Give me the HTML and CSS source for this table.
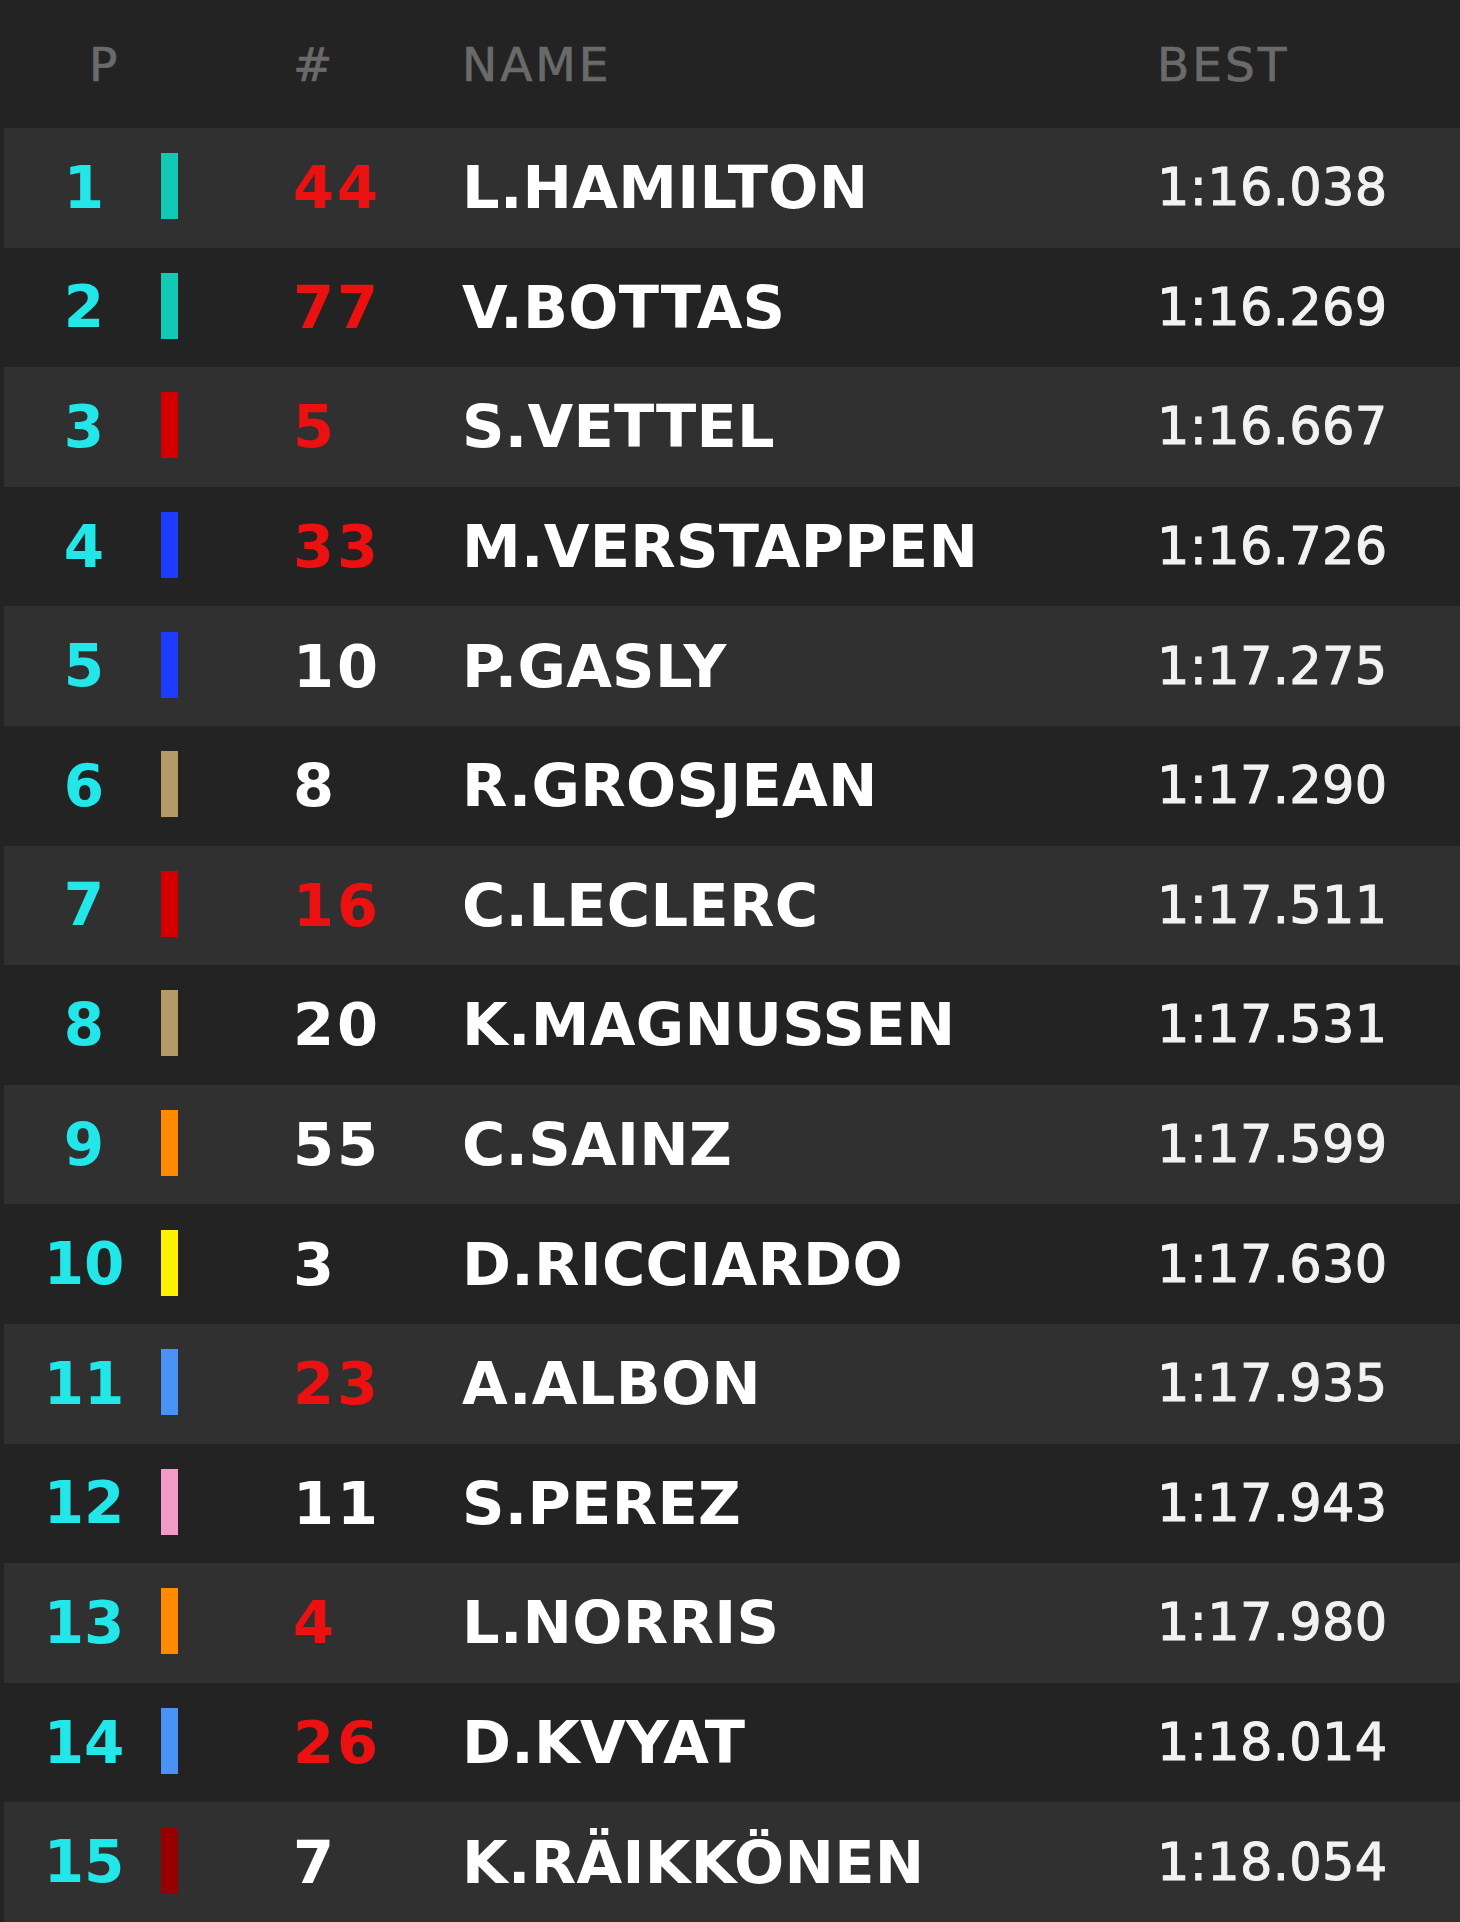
FILE: index.html
```html
<!DOCTYPE html>
<html>
<head>
<meta charset="utf-8">
<link rel="stylesheet" href="styles.css">
</head>
<body>
<div class="board">
  <div class="head">
    <div class="h-pos">P</div>
    <div class="h-num">#</div>
    <div class="h-name">NAME</div>
    <div class="h-best">BEST</div>
  </div>
  <div class="row odd"><div class="pos">1</div><div class="bar mercedes"></div><div class="num red">44</div><div class="name">L.HAMILTON</div><div class="best">1:16.038</div></div>
  <div class="row"><div class="pos">2</div><div class="bar mercedes"></div><div class="num red">77</div><div class="name">V.BOTTAS</div><div class="best">1:16.269</div></div>
  <div class="row odd"><div class="pos">3</div><div class="bar ferrari"></div><div class="num red">5</div><div class="name">S.VETTEL</div><div class="best">1:16.667</div></div>
  <div class="row"><div class="pos">4</div><div class="bar redbull"></div><div class="num red">33</div><div class="name">M.VERSTAPPEN</div><div class="best">1:16.726</div></div>
  <div class="row odd"><div class="pos">5</div><div class="bar redbull"></div><div class="num">10</div><div class="name">P.GASLY</div><div class="best">1:17.275</div></div>
  <div class="row"><div class="pos">6</div><div class="bar haas"></div><div class="num">8</div><div class="name">R.GROSJEAN</div><div class="best">1:17.290</div></div>
  <div class="row odd"><div class="pos">7</div><div class="bar ferrari"></div><div class="num red">16</div><div class="name">C.LECLERC</div><div class="best">1:17.511</div></div>
  <div class="row"><div class="pos">8</div><div class="bar haas"></div><div class="num">20</div><div class="name">K.MAGNUSSEN</div><div class="best">1:17.531</div></div>
  <div class="row odd"><div class="pos">9</div><div class="bar mclaren"></div><div class="num">55</div><div class="name">C.SAINZ</div><div class="best">1:17.599</div></div>
  <div class="row"><div class="pos">10</div><div class="bar renault"></div><div class="num">3</div><div class="name">D.RICCIARDO</div><div class="best">1:17.630</div></div>
  <div class="row odd"><div class="pos">11</div><div class="bar tororosso"></div><div class="num red">23</div><div class="name">A.ALBON</div><div class="best">1:17.935</div></div>
  <div class="row"><div class="pos">12</div><div class="bar racingpoint"></div><div class="num">11</div><div class="name">S.PEREZ</div><div class="best">1:17.943</div></div>
  <div class="row odd"><div class="pos">13</div><div class="bar mclaren"></div><div class="num red">4</div><div class="name">L.NORRIS</div><div class="best">1:17.980</div></div>
  <div class="row"><div class="pos">14</div><div class="bar tororosso"></div><div class="num red">26</div><div class="name">D.KVYAT</div><div class="best">1:18.014</div></div>
  <div class="row odd"><div class="pos">15</div><div class="bar alfa"></div><div class="num">7</div><div class="name">K.RÄIKKÖNEN</div><div class="best">1:18.054</div></div>
</div>
</body>
</html>
```

FILE: styles.css
```css
html, body {
  margin: 0;
  padding: 0;
  background: #232323;
}
body {
  width: 1460px;
  height: 1922px;
  overflow: hidden;
  font-family: "DejaVu Sans", sans-serif;
}
.board {
  margin-left: 4px;
}
.head {
  height: 128px;
  display: flex;
  align-items: center;
  padding-left: 20px;
  color: #6a6a6a;
  font-size: 47px;
  letter-spacing: 3px;
  -webkit-text-stroke: 0.7px #6a6a6a;
}
.h-pos {
  width: 120px;
  padding-left: 65px;
  box-sizing: border-box;
}
.h-num {
  margin-left: 149px;
  width: 169px;
}
.h-name {
  width: 695px;
}
.row {
  height: 119.6px;
  display: flex;
  align-items: center;
  padding-left: 20px;
}
.row.odd {
  background: #303030;
}
.pos {
  width: 120px;
  text-align: center;
  color: #22e6e8;
  font-weight: bold;
  font-size: 58px;
}
.bar {
  margin-left: 17px;
  width: 17px;
  height: 66px;
  margin-top: -3px;
}
.num {
  margin-left: 115px;
  width: 169px;
  color: #ffffff;
  font-weight: bold;
  font-size: 59px;
  letter-spacing: 3px;
}
.num.red {
  color: #ec1111;
}
.name {
  width: 695px;
  color: #ffffff;
  font-weight: bold;
  font-size: 59px;
  letter-spacing: 0.3px;
}
.best {
  color: #f2f2f2;
  font-size: 51px;
  letter-spacing: 0.3px;
  -webkit-text-stroke: 1px #f2f2f2;
}
.mercedes { background: #12c9b5; }
.ferrari { background: #d40000; }
.redbull { background: #1e3cff; }
.haas { background: #b59a68; }
.mclaren { background: #ff8a00; }
.renault { background: #fff200; }
.tororosso { background: #4a93f5; }
.racingpoint { background: #f29ac8; }
.alfa { background: #960000; }
```
